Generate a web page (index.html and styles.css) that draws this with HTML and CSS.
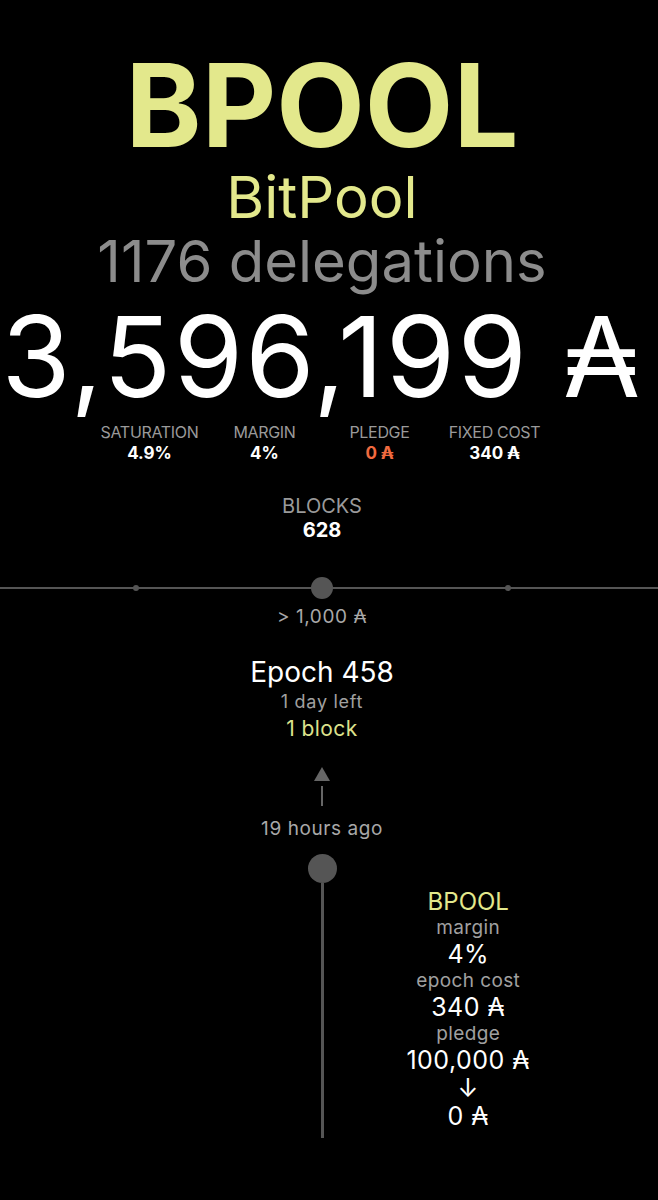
FILE: index.html
```html
<!DOCTYPE html>
<html lang="en">
<head>
    <meta charset="UTF-8">
    <meta name="viewport" content="width=device-width, initial-scale=1.0">
    <title>BPOOL</title>
    <link rel="stylesheet" href="styles.css">
</head>
<body>
    <div class="page">
        <h1 class="ticker">BPOOL</h1>
        <div class="name">BitPool</div>
        <div class="delegations">1176 delegations</div>
        <div class="stake">3,596,199 ₳</div>

        <ul class="stats">
            <li><span class="label">SATURATION</span><span class="value">4.9%</span></li>
            <li><span class="label">MARGIN</span><span class="value">4%</span></li>
            <li><span class="label">PLEDGE</span><span class="value warn">0 ₳</span></li>
            <li><span class="label">FIXED COST</span><span class="value">340 ₳</span></li>
        </ul>

        <div class="blocks">
            <span class="label">BLOCKS</span>
            <span class="value">628</span>
        </div>
    </div>

    <div class="scale">
        <div class="scale-dots">
            <span class="tick"></span>
            <span class="knob"></span>
            <span class="tick"></span>
        </div>
    </div>

    <div class="page">
        <div class="scale-label">&gt; 1,000 ₳</div>

        <div class="epoch">
            <div class="epoch-title">Epoch 458</div>
            <div class="epoch-left">1 day left</div>
            <div class="epoch-blocks">1 block</div>
        </div>

        <div class="arrow-up">
            <span class="head"></span>
            <span class="stem"></span>
        </div>

        <div class="ago">19 hours ago</div>

        <div class="timeline">
            <div></div>
            <div class="track">
                <span class="dot"></span>
                <span class="rail"></span>
            </div>
            <div class="event">
                <div class="event-pool">BPOOL</div>
                <div class="event-label">margin</div>
                <div class="event-value">4%</div>
                <div class="event-label">epoch cost</div>
                <div class="event-value">340 ₳</div>
                <div class="event-label">pledge</div>
                <div class="event-value">100,000 ₳</div>
                <div class="event-value">↓</div>
                <div class="event-value">0 ₳</div>
            </div>
        </div>
    </div>
</body>
</html>
```

FILE: styles.css
```css
body {
    margin: 0;
    background: #000;
    color: #fff;
    font-family: Inter, "Noto Sans", "DejaVu Sans", sans-serif;
}
.page {
    width: 644px;
    display: flex;
    flex-direction: column;
    align-items: center;
    text-align: center;
}
.page:first-child {
    padding-top: 46px;
}
.ticker {
    margin: 0;
    font-size: 115px;
    line-height: 119px;
    font-weight: 700;
    color: #e3e88c;
}
.name {
    font-size: 58px;
    line-height: 64px;
    color: #e3e88c;
}
.delegations {
    font-size: 58px;
    line-height: 64px;
    color: #8c8c8c;
}
.stake {
    font-size: 112px;
    line-height: 127px;
    letter-spacing: 0.02em;
}
.stats {
    list-style: none;
    margin: 2px 0 0;
    padding: 0;
    display: grid;
    grid-template-columns: repeat(4, 115px);
}
.stats li {
    display: flex;
    flex-direction: column;
    align-items: center;
}
.stats .label {
    font-size: 16px;
    line-height: 20px;
    color: #9a9a9a;
    letter-spacing: -0.02em;
}
.stats .value {
    font-size: 17px;
    line-height: 22px;
    font-weight: 700;
}
.stats .warn {
    color: #f06a3f;
}
.blocks {
    margin-top: 30px;
    display: flex;
    flex-direction: column;
    align-items: center;
}
.blocks .label {
    font-size: 20px;
    line-height: 24px;
    color: #9a9a9a;
}
.blocks .value {
    font-size: 20px;
    line-height: 24px;
    font-weight: 700;
}
.scale {
    margin-top: 35px;
    background: linear-gradient(#555, #555) center / 100% 2px no-repeat;
}
.scale-dots {
    width: 644px;
    display: flex;
    justify-content: center;
    align-items: center;
    gap: 172px;
}
.tick {
    width: 6px;
    height: 6px;
    border-radius: 50%;
    background: #555;
}
.knob {
    width: 22px;
    height: 22px;
    border-radius: 50%;
    background: #555;
}
.scale-label {
    margin-top: 7px;
    font-size: 19px;
    line-height: 22px;
    letter-spacing: 0.03em;
    color: #a8a8a8;
}
.epoch {
    margin-top: 27px;
}
.epoch-title {
    font-size: 28px;
    line-height: 34px;
}
.epoch-left {
    font-size: 18px;
    line-height: 26px;
    letter-spacing: 0.04em;
    color: #a0a0a0;
}
.epoch-blocks {
    font-size: 21px;
    line-height: 28px;
    letter-spacing: 0.02em;
    color: #dde28c;
}
.arrow-up {
    margin-top: 24px;
    display: flex;
    flex-direction: column;
    align-items: center;
    gap: 5px;
}
.arrow-up .head {
    width: 0;
    height: 0;
    border-left: 8px solid transparent;
    border-right: 8px solid transparent;
    border-bottom: 14px solid #666;
}
.arrow-up .stem {
    width: 2px;
    height: 20px;
    background: #666;
}
.ago {
    margin-top: 11px;
    font-size: 19px;
    line-height: 24px;
    letter-spacing: 0.03em;
    color: #a8a8a8;
}
.timeline {
    margin-top: 13px;
    width: 556px;
    display: grid;
    grid-template-columns: 1fr 29px 1fr;
}
.track {
    display: flex;
    flex-direction: column;
    align-items: center;
}
.track .dot {
    width: 29px;
    height: 29px;
    border-radius: 50%;
    background: #555;
}
.track .rail {
    width: 3px;
    height: 255px;
    background: #555;
}
.event {
    padding-top: 34px;
    display: flex;
    flex-direction: column;
    align-items: center;
}
.event-pool {
    font-size: 24px;
    line-height: 27px;
    color: #e3e88c;
}
.event-label {
    font-size: 19px;
    line-height: 25px;
    letter-spacing: 0.02em;
    color: #a0a0a0;
}
.event-value {
    font-size: 25px;
    line-height: 28px;
    letter-spacing: 0.02em;
}
```
